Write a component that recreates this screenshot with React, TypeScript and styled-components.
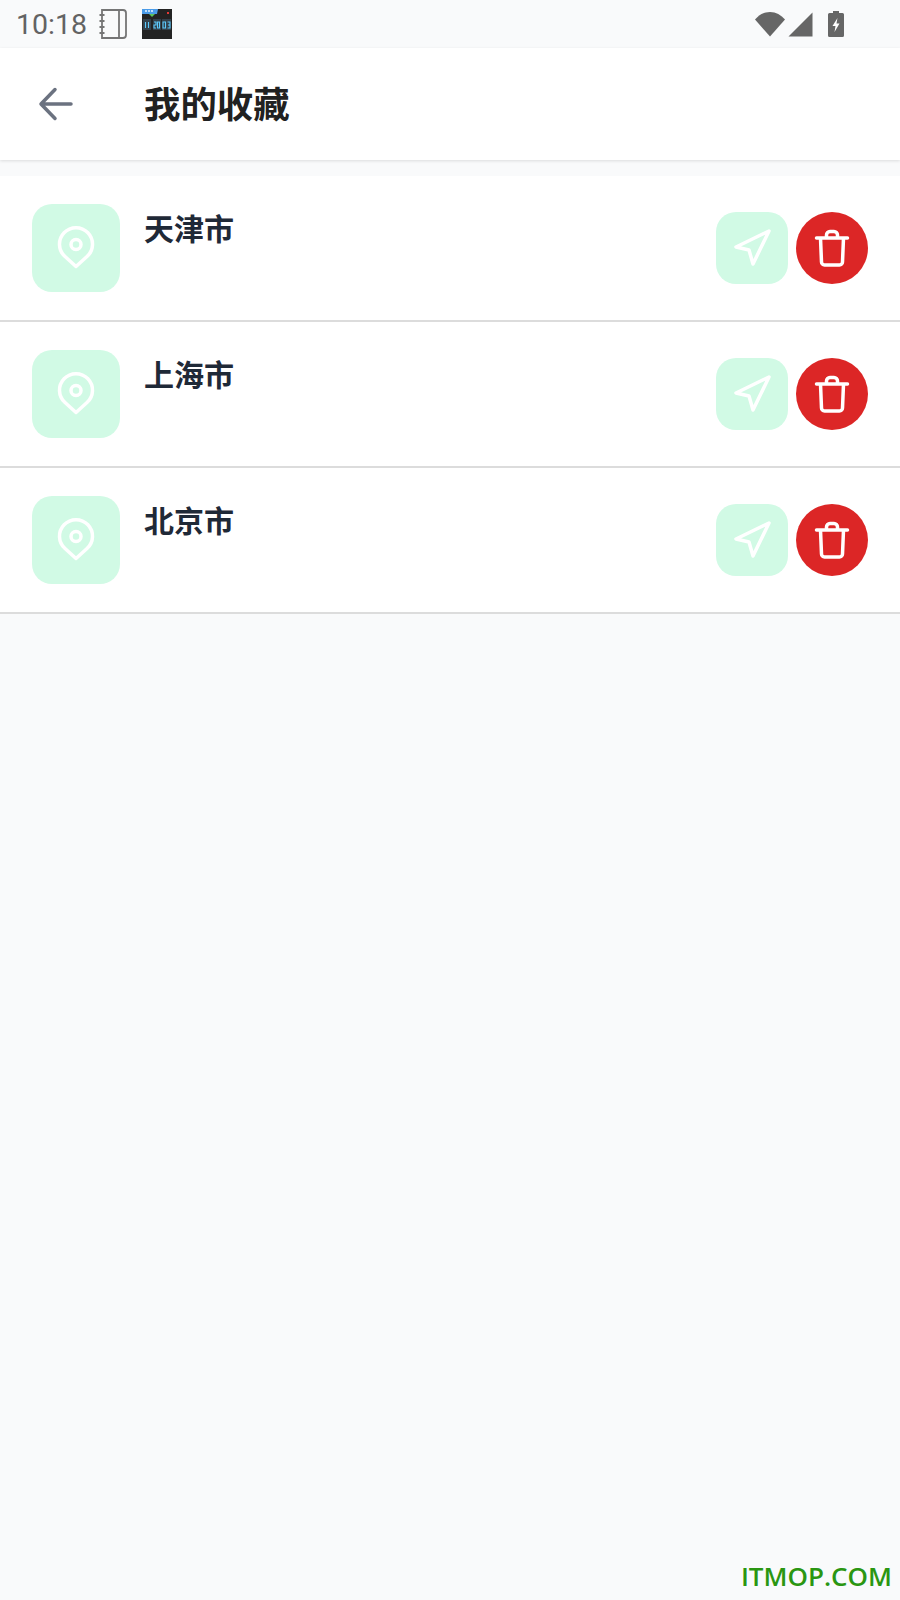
import React from "react";
import styled, { createGlobalStyle } from "styled-components";

const CITIES = ["天津市", "上海市", "北京市"];

const App = () => {
  return (
    <Page>
      <Global />
      <StatusBar>
        <StatusLeft>
          <Clock>10:18</Clock>
          <svg width="28" height="30" viewBox="0 0 28 30" fill="none" stroke="#757575" strokeWidth="1.8">
            <path d="M3 1h21a3 3 0 0 1 3 3v22a3 3 0 0 1-3 3H3z" />
            <path d="M20 1v28" />
            <path d="M0.500 6h5M0.500 12h5M0.500 18h5M0.500 24h5" strokeWidth="2" />
          </svg>
          <MiniWidget>
            <svg width="30" height="30" viewBox="0 0 30 30">
              <rect width="30" height="30" fill="#232323" />
              <path d="M0 0h16l-1 5H0z" fill="#4a9be8" />
              <path d="M3 2h9" stroke="#e8f4ff" strokeWidth="1.500" strokeDasharray="2 1" />
              <path d="M7 5h6l-3 3z" fill="#5cc45a" />
              <rect x="25" y="3" width="2" height="2" fill="#e53935" />
              <rect x="1" y="10" width="8" height="11" fill="#33414c" />
              <rect x="11" y="10" width="8" height="11" fill="#33414c" />
              <rect x="20" y="10" width="9" height="11" fill="#33414c" />
              <path d="M3.500 13v6M6.500 13v6M12 13h2v3h-2v3h2M15.500 13h2v6h-2zM21 13h2.500v6H21zM25.500 13h2.500v6h-2.500M26 16h2" fill="none" stroke="#5cc8fa" strokeWidth="1.100" />
            </svg>
          </MiniWidget>
        </StatusLeft>
        <StatusRight>
          <svg width="30" height="26" viewBox="0 0 30 26">
            <path d="M0 8.500C4 4 9 1 15 1s11 3 15 7.500L15 25.500z" fill="#666" />
          </svg>
          <svg width="25" height="25" viewBox="0 0 25 25">
            <path d="M0.500 24.500L24.500 0.500v24z" fill="#666" />
          </svg>
          <BatteryIcon width="16" height="26" viewBox="0 0 16 26">
            <path d="M5 0h6v2h3.500a1.500 1.500 0 0 1 1.500 1.500v21a1.500 1.500 0 0 1-1.500 1.500h-13A1.500 1.500 0 0 1 0 24.500v-21A1.500 1.500 0 0 1 1.500 2H5z" fill="#666" />
            <path d="M9.500 7L4.500 15H7.500l-1 6 5-8.500H8.500z" fill="#fff" />
          </BatteryIcon>
        </StatusRight>
      </StatusBar>

      <Header>
        <BackButton>
          <svg width="48" height="48" viewBox="0 0 48 48" fill="none" stroke="#6b7280" strokeWidth="3.500" strokeLinecap="round" strokeLinejoin="round">
            <path d="M39 24H9.500M23 9.500L9 24l14 14.500" />
          </svg>
        </BackButton>
        <Title>我的收藏</Title>
      </Header>

      <List>
        {CITIES.map((city) => (
          <Row key={city}>
            <PinTile>
              <svg width="48" height="48" viewBox="0 0 48 48" fill="none" stroke="#fff" strokeWidth="3.500">
                <path d="M24 42.500L13 32.500A16.500 16.500 0 1 1 35 32.500z" strokeLinejoin="round" />
                <circle cx="24" cy="20.500" r="5" />
              </svg>
            </PinTile>
            <CityName>{city}</CityName>
            <Actions>
              <NavButton>
                <svg width="48" height="48" viewBox="0 0 48 48" fill="none" stroke="#fff" strokeWidth="3.500" strokeLinejoin="round">
                  <path d="M41 7L8 23l13 3 4 14z" />
                </svg>
              </NavButton>
              <DeleteButton>
                <svg width="48" height="48" viewBox="0 0 48 48" fill="none" stroke="#fff" strokeWidth="3.500" strokeLinecap="round" strokeLinejoin="round">
                  <path d="M8.500 14h31M12.500 14l1 24a3 3 0 0 0 3 3h15a3 3 0 0 0 3-3l1-24M18.500 14v-3a3.500 3.500 0 0 1 3.500-3.500h4a3.500 3.500 0 0 1 3.500 3.500v3" />
                </svg>
              </DeleteButton>
            </Actions>
          </Row>
        ))}
      </List>

      <Watermark>ITMOP.COM</Watermark>
    </Page>
  );
};

export default App;

const Global = createGlobalStyle`
  body {
    margin: 0;
    background-color: #f9fafb;
    font-family: "Noto Sans CJK SC", "Noto Sans", sans-serif;
  }
`;

const Page = styled.div`
  position: relative;
  width: 900px;
  height: 1600px;
  overflow: hidden;
  background-color: #f9fafb;
`;

const StatusBar = styled.div`
  height: 48px;
  display: flex;
  align-items: center;
  justify-content: space-between;
  padding: 0 56px 0 16px;
`;

const StatusLeft = styled.div`
  display: flex;
  align-items: center;
`;

const Clock = styled.span`
  font-family: Roboto, sans-serif;
  font-size: 28.500px;
  font-weight: 400;
  color: #636363;
  width: 83px;
`;

const MiniWidget = styled.div`
  display: flex;
  margin-left: 15px;
`;

const StatusRight = styled.div`
  display: flex;
  align-items: center;
  gap: 3px;
`;

const BatteryIcon = styled.svg`
  margin-left: 12px;
`;

const Header = styled.div`
  height: 112px;
  display: flex;
  align-items: center;
  padding-left: 32px;
  background-color: #ffffff;
  box-shadow: 0 1px 3px rgba(0, 0, 0, 0.12);
`;

const BackButton = styled.div`
  width: 48px;
  height: 48px;
  margin-right: 64px;
`;

const Title = styled.div`
  font-size: 36.400px;
  font-weight: 700;
  color: #212121;
  line-height: 44px;
  margin-bottom: 4px;
`;

const List = styled.div`
  margin-top: 16px;
  background-color: #ffffff;
`;

const Row = styled.div`
  display: flex;
  align-items: flex-start;
  padding: 28px 32px;
  border-bottom: 2px solid #dcdcdc;
`;

const PinTile = styled.div`
  width: 88px;
  height: 88px;
  border-radius: 20px;
  background-color: #d1fae5;
  display: flex;
  align-items: center;
  justify-content: center;
`;

const CityName = styled.div`
  flex: 1;
  margin-left: 24px;
  font-size: 30px;
  font-weight: 700;
  line-height: 46px;
  color: #1f2937;
`;

const Actions = styled.div`
  display: flex;
  gap: 8px;
  margin-top: 8px;
`;

const NavButton = styled.div`
  width: 72px;
  height: 72px;
  border-radius: 20px;
  background-color: #d1fae5;
  display: flex;
  align-items: center;
  justify-content: center;
`;

const DeleteButton = styled(NavButton)`
  border-radius: 50%;
  background-color: #dc2626;
`;

const Watermark = styled.div`
  position: absolute;
  right: 8px;
  bottom: 8px;
  font-family: "Open Sans", sans-serif;
  font-size: 26px;
  font-weight: 600;
  color: #2a9612;
  line-height: 32px;
`;
